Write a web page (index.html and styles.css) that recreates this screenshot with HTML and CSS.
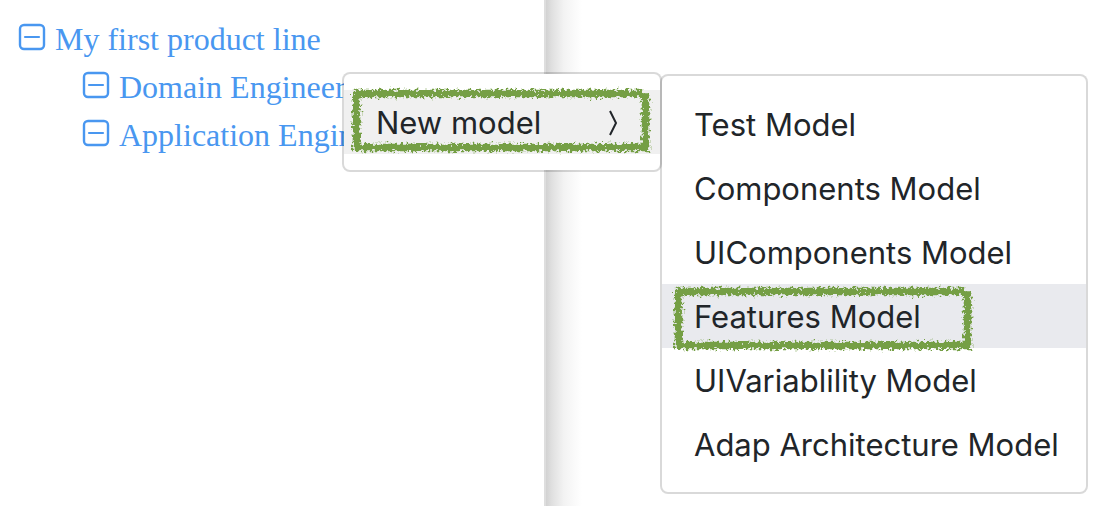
FILE: index.html
```
<!DOCTYPE html>
<html lang="en">
<head>
<meta charset="utf-8">
<title>Product line</title>
<link rel="stylesheet" href="styles.css">
</head>
<body>
<svg class="defs" aria-hidden="true">
  <defs>
    <filter id="crayon" filterUnits="userSpaceOnUse" x="0" y="0" width="308" height="74">
      <feTurbulence type="fractalNoise" baseFrequency="0.36" numOctaves="2" seed="4" result="noise"/>
      <feDisplacementMap in="SourceGraphic" in2="noise" scale="9" xChannelSelector="R" yChannelSelector="G"/>
    </filter>
    <symbol id="minus-square" viewBox="0 0 28 28">
      <rect x="2" y="2" width="24" height="24" rx="4" fill="none" stroke="currentColor" stroke-width="2.4"/>
      <path d="M7 14h14" stroke="currentColor" stroke-width="2.2" stroke-linecap="round"/>
    </symbol>
    <symbol id="marker" viewBox="0 0 308 74">
      <path d="M8.500 8.500H292M297.500 12V62M8.500 8.500V62.500H297.500" fill="none" stroke="#749f45" stroke-width="7.600" stroke-linecap="square" filter="url(#crayon)"/>
    </symbol>
  </defs>
</svg>
<div class="workspace">
  <nav class="explorer" aria-label="Product line">
    <ul class="tree">
      <li>
        <a class="node" href="#line"><svg class="node-icon"><use href="#minus-square"/></svg>My first product line</a>
        <ul class="branch">
          <li><a class="node" href="#domain"><svg class="node-icon"><use href="#minus-square"/></svg>Domain Engineering</a></li>
          <li><a class="node" href="#application"><svg class="node-icon"><use href="#minus-square"/></svg>Application Engineering</a></li>
        </ul>
      </li>
    </ul>
  </nav>
  <main class="canvas"></main>
</div>
<div class="menu context-menu">
  <button class="item open" type="button">New model
    <svg class="chevron" viewBox="0 0 12 28"><path d="M2 2l6 12-6 12" fill="none" stroke="currentColor" stroke-width="2"/></svg>
    <svg class="marker"><use href="#marker"/></svg>
  </button>
  <div class="menu submenu">
    <button class="item" type="button">Test Model</button>
    <button class="item" type="button">Components Model</button>
    <button class="item" type="button">UIComponents Model</button>
    <button class="item active" type="button">Features Model<svg class="marker marker-inset"><use href="#marker"/></svg></button>
    <button class="item" type="button">UIVariablility Model</button>
    <button class="item" type="button">Adap Architecture Model</button>
  </div>
</div>
</body>
</html>
```
FILE: styles.css
```
* { box-sizing: border-box; }

body {
  margin: 0;
  background: #fff;
  overflow: hidden;
}

.defs {
  position: absolute;
  width: 0;
  height: 0;
}

.workspace {
  display: grid;
  grid-template-columns: 544fr 570fr;
  min-height: 100vh;
}

.explorer {
  padding: 15px 18px;
  font: 32px/48px "Liberation Serif", serif;
}

.tree,
.branch {
  margin: 0;
  padding: 0;
  list-style: none;
}

.branch { padding-left: 64px; }

.node {
  display: flex;
  align-items: center;
  gap: 9px;
  color: #4997f0;
  text-decoration: none;
  white-space: nowrap;
}

.node-icon {
  flex: none;
  width: 28px;
  height: 28px;
  margin-bottom: 4px;
}

.canvas {
  border-left: 2px solid #dedede;
  background: linear-gradient(to right, #d2d2d2, #e0e0e0 6px, #f3f3f3 18px, #fff 36px);
}

.menu {
  position: absolute;
  padding: 16px 0;
  border: 2px solid rgba(0, 0, 0, 0.15);
  border-radius: 8px;
  background: #fff;
  background-clip: padding-box;
}

.context-menu {
  top: 72px;
  left: 342px;
  width: 320px;
}

.submenu {
  top: 0;
  left: 100%;
  width: 428px;
}

.item {
  position: relative;
  display: flex;
  align-items: center;
  justify-content: space-between;
  width: 100%;
  padding: 9px 32px 7px;
  border: 0;
  background: none;
  color: #212529;
  font: 31px/48px Inter, sans-serif;
  white-space: nowrap;
}

.open { background: #f0f0f0; }

.active { background: #e9eaee; }

.chevron {
  width: 12px;
  height: 28px;
  margin-right: 8px;
}

.marker {
  position: absolute;
  top: -5px;
  left: 4px;
  width: 308px;
  height: 74px;
  pointer-events: none;
}

.marker-inset {
  top: -1px;
  left: 8px;
}
```
